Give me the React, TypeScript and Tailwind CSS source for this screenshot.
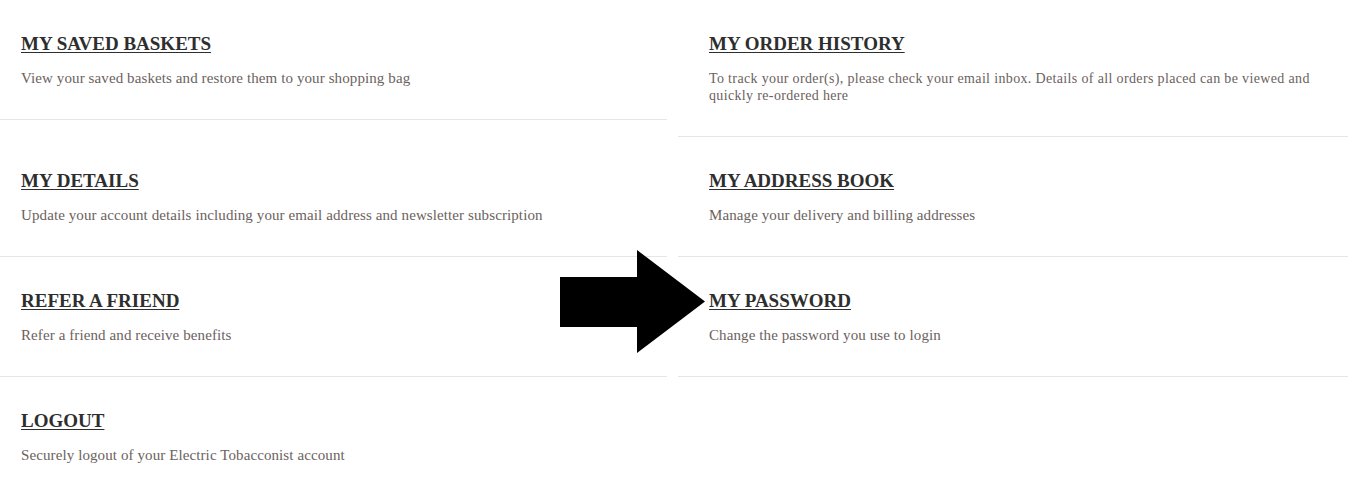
type Item = {
  title: string;
  text: string;
  narrow?: boolean;
};

const items: Item[] = [
  { title: "MY SAVED BASKETS", text: "View your saved baskets and restore them to your shopping bag" },
  {
    title: "MY ORDER HISTORY",
    text: "To track your order(s), please check your email inbox. Details of all orders placed can be viewed and quickly re-ordered here",
    narrow: true,
  },
  { title: "MY DETAILS", text: "Update your account details including your email address and newsletter subscription" },
  { title: "MY ADDRESS BOOK", text: "Manage your delivery and billing addresses" },
  { title: "REFER A FRIEND", text: "Refer a friend and receive benefits" },
  { title: "MY PASSWORD", text: "Change the password you use to login" },
  { title: "LOGOUT", text: "Securely logout of your Electric Tobacconist account" },
];

function AccountLink({ item, right }: { item: Item; right: boolean }) {
  return (
    <div
      className={`border-b border-[#e6e6e6] pt-[30px] pb-[32px] ${right ? "pl-[31px] pr-[30px]" : "pl-[21px] pr-[18px]"}`}
    >
      <a
        href="#"
        className="block w-fit text-[19px] leading-[28px] font-bold text-[#2e2e2e] underline decoration-1 underline-offset-[2px]"
      >
        {item.title}
      </a>
      <p
        className={`mt-[12px] leading-[17px] text-[#6b625e] ${item.narrow ? "text-[14px] tracking-[0.35px]" : "text-[15px] tracking-[0.1px]"}`}
      >
        {item.text}
      </p>
    </div>
  );
}

function Arrow() {
  return (
    <svg
      className="absolute left-[560px] top-[250px]"
      width="146"
      height="104"
      viewBox="0 0 146 104"
    >
      <polygon points="0,27 77,27 77,0 145,51.5 77,103 77,77 0,77" fill="#000" />
    </svg>
  );
}

export default function App() {
  return (
    <div className="relative min-h-[483px] w-[1348px] bg-white font-['Liberation_Serif',serif]">
      <div className="grid grid-cols-[667px_1fr] items-start gap-x-[11px]">
        {items.map((item, i) => (
          <AccountLink key={item.title} item={item} right={i % 2 === 1} />
        ))}
      </div>
      <Arrow />
    </div>
  );
}
